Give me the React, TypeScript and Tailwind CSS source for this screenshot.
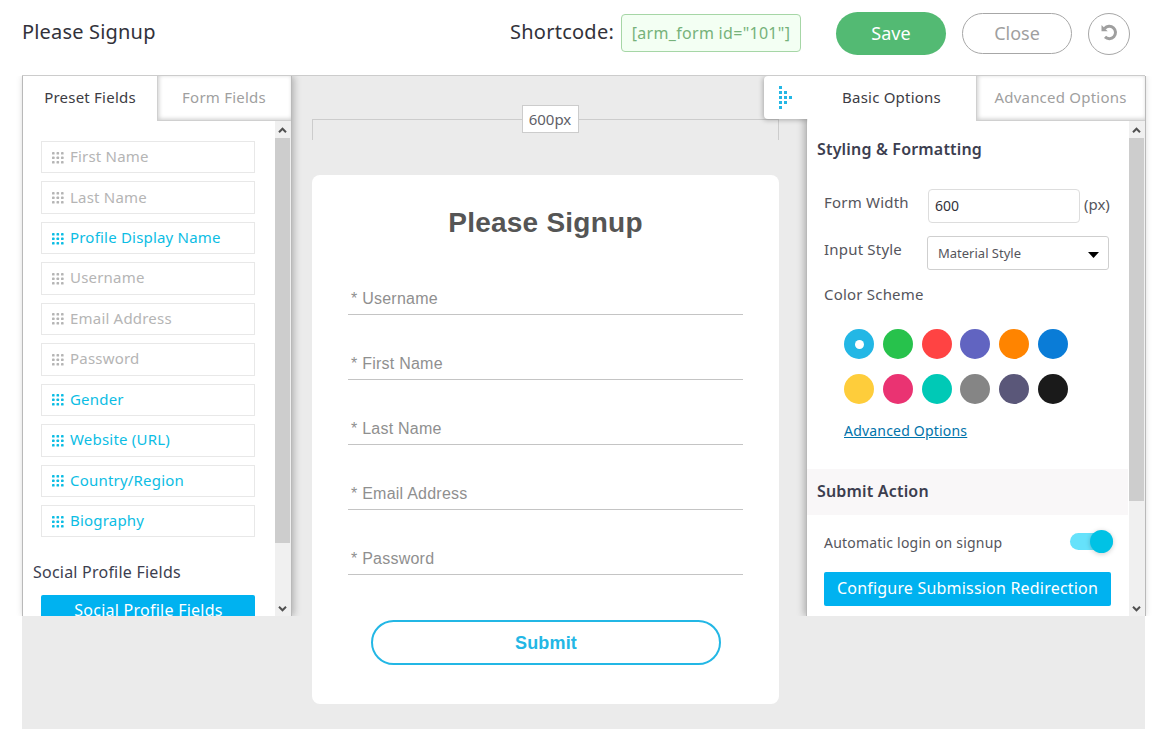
import React from "react";

type Field = { label: string; active?: boolean };

const presetFields: Field[] = [
  { label: "First Name" },
  { label: "Last Name" },
  { label: "Profile Display Name", active: true },
  { label: "Username" },
  { label: "Email Address" },
  { label: "Password" },
  { label: "Gender", active: true },
  { label: "Website (URL)", active: true },
  { label: "Country/Region", active: true },
  { label: "Biography", active: true },
];

const formFields = ["Username", "First Name", "Last Name", "Email Address", "Password"];

const swatches = [
  "bg-[#23b7e5]",
  "bg-[#27c24c]",
  "bg-[#ff4343]",
  "bg-[#6164c1]",
  "bg-[#ff8400]",
  "bg-[#0a7cd7]",
  "bg-[#fecd3b]",
  "bg-[#ea3372]",
  "bg-[#00c9b6]",
  "bg-[#858585]",
  "bg-[#5a5779]",
  "bg-[#1a1a1a]",
];

function DragGrip() {
  return (
    <svg width="12" height="12" viewBox="0 0 12 12" fill="currentColor" className="mt-px shrink-0">
      {[0, 4.5, 9].map((y) =>
        [0, 4.5, 9].map((x) => <rect key={`${x}-${y}`} x={x} y={y} width="2.6" height="2.6" rx="0.7" />)
      )}
    </svg>
  );
}

function Scrollbar({ thumb }: { thumb: string }) {
  return (
    <div className="flex w-4 shrink-0 flex-col bg-[#f0f0f0]">
      <div className="flex h-[18px] shrink-0 items-center justify-center pr-px">
        <svg width="9" height="7" viewBox="0 0 9 7" fill="none" stroke="#505050" strokeWidth="2">
          <path d="M1 5.2 4.5 1.7 8 5.2" />
        </svg>
      </div>
      <div className={`-mt-px w-[15px] bg-[#cdcdcd] ${thumb}`} />
      <div className="mt-auto flex h-[15px] items-center justify-center pr-px">
        <svg width="9" height="7" viewBox="0 0 9 7" fill="none" stroke="#505050" strokeWidth="2">
          <path d="M1 1.8 4.5 5.3 8 1.8" />
        </svg>
      </div>
    </div>
  );
}

function Tabs({ active, inactive, activeWidth }: { active: string; inactive: string; activeWidth: string }) {
  return (
    <div className="flex h-[45px] shrink-0 text-[15px] leading-[43px] tracking-[0.22px]">
      <div className={`shrink-0 text-center text-[#3c3c44] ${activeWidth}`}>{active}</div>
      <div className="flex-1 border-b border-l border-[#d0d0d0] pr-px text-center text-[#9f9f9f] shadow-[inset_1px_-1px_4px_rgba(0,0,0,0.2)]">
        {inactive}
      </div>
    </div>
  );
}

function LeftPanel() {
  return (
    <aside className="relative flex h-[540px] w-[270px] shrink-0 flex-col border-l border-r border-[#b9b9b9] bg-white shadow-[2px_0_7px_rgba(0,0,0,0.25)] [clip-path:inset(0_-12px)]">
      <Tabs active="Preset Fields" inactive="Form Fields" activeWidth="w-[134px]" />
      <div className="flex min-h-0 flex-1">
        <div className="min-w-0 flex-1 overflow-hidden pt-5">
          <ul className="ml-[18px] flex w-[214px] flex-col gap-2">
            {presetFields.map((f) => (
              <li
                key={f.label}
                className={`flex h-[32.45px] items-center gap-[6px] border border-[#e8e8e8] pl-2.5 text-[15px] leading-[29px] tracking-[0.2px] ${
                  f.active ? "text-[#0cbde4]" : "text-[#b5b5b5]"
                }`}
              >
                <DragGrip />
                <span className="-mt-[1.2px]">{f.label}</span>
              </li>
            ))}
          </ul>
          <h3 className="ml-2.5 mt-[23px] h-[35px] text-base leading-6 tracking-[0.22px] text-[#3c3e4f]">Social Profile Fields</h3>
          <button className="ml-[18px] block h-[34px] w-[214px] rounded-xs bg-[#00b2f0] pb-[3px] pl-px text-base leading-[31px] tracking-[0.25px] text-white">
            Social Profile Fields
          </button>
        </div>
        <Scrollbar thumb="h-[405px]" />
      </div>
    </aside>
  );
}

function FormCanvas() {
  return (
    <section className="flex w-[514px] shrink-0 flex-col items-center pl-0 pr-[8px] pt-[29px]">
      <div className="relative flex h-[70px] w-[467px] justify-center pl-[10px]">
        <div className="absolute left-0 top-[14px] h-[21px] w-full border-l border-r border-t border-[#cccccc]" />
        <div className="relative h-7 w-[57px] border border-[#cccccc] bg-white text-center text-[15px] leading-[27px] text-[#5f5f68]">
          600px
        </div>
      </div>
      <div className="flex h-[529px] w-[467px] flex-col rounded-lg bg-white px-9 font-['Liberation_Sans',sans-serif]">
        <h2 className="mt-[29px] pl-px text-center text-[28px] font-bold leading-[38px] tracking-[0.24px] text-[#555555]">Please Signup</h2>
        <div className="mt-[43px] flex flex-col">
          {formFields.map((f) => (
            <div key={f} className="mb-[35px] h-[30px] border-b border-[#c4c4c4] pl-[3.5px] text-base leading-[28px] tracking-[0.24px] text-[#8f8f8f]">
              * {f}
            </div>
          ))}
        </div>
        <button className="ml-[23px] mt-[10px] h-[45px] w-[350px] rounded-full border-2 border-[#23b7e5] pl-px pt-px text-lg font-bold leading-[41px] tracking-[0.15px] text-[#23b7e5]">
          Submit
        </button>
      </div>
    </section>
  );
}

function CollapseHandle() {
  const dots = [
    [0, 0], [0, 5], [0, 10], [0, 15], [0, 20],
    [5, 5], [5, 10], [5, 15],
    [10, 10],
  ];
  return (
    <button className="absolute -left-[42px] top-0 z-10 h-[43px] w-[44px] rounded-l-[4px] bg-white pl-[15px] shadow-[-1px_1px_5px_rgba(0,0,0,0.28)] [clip-path:inset(0_0_-8px_-8px)]">
      <svg width="13" height="23" viewBox="0 0 13 23" fill="#23b7e5">
        {dots.map(([x, y]) => (
          <rect key={`${x}-${y}`} x={x} y={y} width="3" height="3" />
        ))}
      </svg>
    </button>
  );
}

function RightPanel() {
  return (
    <aside className="relative -mr-px h-[540px] w-[340px] shrink-0 [clip-path:inset(0_-12px_0_-60px)]">
      <CollapseHandle />
      <div className="relative flex h-full flex-col border-l border-r border-[#b9b9b9] bg-white shadow-[-2px_0_7px_rgba(0,0,0,0.25)]">
        <Tabs active="Basic Options" inactive="Advanced Options" activeWidth="w-[169px]" />
        <div className="flex min-h-0 flex-1">
          <div className="min-w-0 flex-1 overflow-hidden">
            <h3 className="pl-[10px] pt-4 text-base font-semibold leading-6 tracking-[0.18px] text-[#3c3e4f]">Styling &amp; Formatting</h3>
            <div className="ml-[17px] mt-7 flex h-[34px] text-[15px] text-[#55555c]">
              <label className="w-[104px] leading-[27px] tracking-[0.2px]">Form Width</label>
              <div className="w-[152px] rounded-[4px] border border-[#dddddd] pl-1.5 text-sm leading-8 text-[#32323a]">600</div>
              <span className="pl-[4px] leading-[31px]">(px)</span>
            </div>
            <div className="ml-[17px] mt-[13px] flex h-[34px] text-[15px] text-[#55555c]">
              <label className="w-[103px] leading-[27px] tracking-[0.2px]">Input Style</label>
              <div className="flex w-[182px] items-center justify-between rounded-[3px] border border-[#cfcfcf] pl-[10px] pr-[9px] text-[13px]">
                <span className="mt-px">Material Style</span>
                <svg width="11" height="6" viewBox="0 0 11 6" className="mt-[3px]">
                  <path d="M0 0h11L5.5 6Z" fill="#000" />
                </svg>
              </div>
            </div>
            <div className="ml-[17px] mt-[11px] text-[15px] leading-[26px] tracking-[0.2px] text-[#55555c]">Color Scheme</div>
            <div className="ml-[37px] mt-[22px] grid w-[233px] grid-cols-6 gap-y-[15px]">
              {swatches.map((c, i) => (
                <span key={c} className={`flex size-[30px] items-center justify-center rounded-full ${c}`}>
                  {i === 0 && <span className="size-[9px] rounded-full bg-white" />}
                </span>
              ))}
            </div>
            <a className="ml-[37px] mt-4 block w-fit text-[14px] leading-[22px] tracking-[0.2px] text-[#0073aa] underline">Advanced Options</a>
            <h3 className="mr-px mt-[27px] h-[46px] bg-[#f9f7f8] pl-[10px] text-base font-semibold leading-[44px] tracking-[0.18px] text-[#3c3e4f]">
              Submit Action
            </h3>
            <div className="ml-[17px] mt-[15px] flex h-[23px] w-[289px] items-start justify-between text-[14px] text-[#55555c]">
              <span className="leading-[25px] tracking-[0.2px]">Automatic login on signup</span>
              <span className="mt-[3px] flex h-[17px] w-[43px] items-center justify-end rounded-full bg-[#66e2fb]">
                <span className="size-[23px] shrink-0 rounded-full bg-[#00c2e5] shadow-[0_1px_5px_rgba(0,0,0,0.2)]" />
              </span>
            </div>
            <button className="ml-[17px] mt-[19px] block h-[34px] w-[287px] rounded-xs bg-[#00b2f0] pb-[2px] text-base leading-8 tracking-[0.2px] text-white">
              <span className="-mt-px block">Configure Submission Redirection</span>
            </button>
          </div>
          <Scrollbar thumb="h-[363px]" />
        </div>
      </div>
    </aside>
  );
}

export default function App() {
  return (
    <main className="flex h-[729px] w-[1155px] flex-col overflow-hidden bg-white font-['Noto_Sans',sans-serif]">
      <header className="flex h-[75px] shrink-0 items-start pl-[22px]">
        <h1 className="w-[488px] pt-4 text-xl leading-8 tracking-[0.18px] text-[#32323a]">Please Signup</h1>
        <span className="w-[111px] pt-4 text-xl leading-8 tracking-[0.25px] text-[#32323a]">Shortcode:</span>
        <code className="mt-[14px] h-[38px] w-[180px] rounded-[4px] border border-[#a6d6a6] bg-[#f3fff3] text-center font-['Noto_Sans',sans-serif] text-base leading-[37px] tracking-[0.3px] text-[#76b27a]">
          [arm_form id="101"]
        </code>
        <button className="ml-[35px] mt-3 h-[43px] w-[110px] rounded-full bg-[#53ba73] text-lg leading-[43px] text-white">Save</button>
        <button className="ml-4 mt-[13px] h-[41px] w-[110px] rounded-full border border-[#a7a7a7] text-lg leading-[39px] text-[#9f9f9f]">
          Close
        </button>
        <button className="ml-4 mt-[13px] flex size-[42px] items-center justify-center rounded-full border border-[#a7a7a7]">
          <svg width="17" height="17" viewBox="0 0 17 17" fill="none" className="-mt-[3px]">
            <path d="M3.6 4.4A6.2 6.2 0 1 1 4 12.9" stroke="#9f9f9f" strokeWidth="3" />
            <path d="M0.5 1v6.2h6.2Z" fill="#9f9f9f" />
          </svg>
        </button>
      </header>
      <div className="ml-[22px] flex h-[654px] w-[1123px] shrink-0 items-start border-t border-[#cccccc] bg-[#ebebeb]">
        <LeftPanel />
        <FormCanvas />
        <RightPanel />
      </div>
    </main>
  );
}
